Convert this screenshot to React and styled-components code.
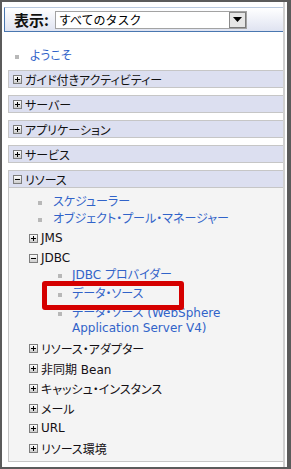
import React from "react";
import styled, { createGlobalStyle } from "styled-components";

const GlobalStyle = createGlobalStyle`
  html, body {
    margin: 0;
    padding: 0;
    background: #ffffff;
  }
  body {
    font-family: "DejaVu Sans", "Noto Sans CJK JP", sans-serif;
  }
`;

const Frame = styled.div`
  position: relative;
  box-sizing: border-box;
  width: 291px;
  height: 469px;
  border: 2px solid #5b5b5b;
  border-right-width: 4px;
  padding-right: 2px;
  background: #ffffff;
  overflow: hidden;
`;

const Panel = styled.div`
  box-sizing: border-box;
  height: 100%;
  border-right: 2px solid #d0d0d0;
  padding: 5px 0 0 2px;
`;

const Header = styled.div`
  box-sizing: border-box;
  display: flex;
  align-items: center;
  height: 25px;
  padding-left: 9px;
  border-top: 1px solid #b8c8de;
  border-left: 1px solid #4a77b0;
  border-bottom: 1px solid #4a77b0;
  background: linear-gradient(#ffffff, #dfe3f1);
`;

const Label = styled.span`
  font-family: "Noto Sans CJK JP", sans-serif;
  font-weight: bold;
  font-size: 15px;
  line-height: 18px;
  color: #111111;
  margin-right: 6px;
`;

const Select = styled.div`
  box-sizing: border-box;
  display: flex;
  align-items: center;
  justify-content: space-between;
  width: 192px;
  height: 18px;
  border: 1px solid #a3a3a3;
  background: #ffffff;
  padding: 0 0 0 3px;
  font-family: "Noto Sans CJK JP", sans-serif;
  font-size: 12px;
  color: #000000;
`;

const DropButton = styled.span`
  box-sizing: border-box;
  display: flex;
  align-items: center;
  justify-content: center;
  width: 17px;
  height: 16px;
  border: 1px solid #7a7a7a;
  border-top-color: #8a8a8a;
  border-left-color: #8a8a8a;
  background: #e6e6e6;
`;

const Welcome = styled.div`
  display: flex;
  align-items: center;
  margin: 17px 0 6px 11px;
  height: 15px;
`;

const Bullet = styled.span`
  display: inline-block;
  width: 4px;
  height: 4px;
  background: #b8b8b8;
  margin-right: ${(p) => p.$gap}px;
  flex-shrink: 0;
`;

const Link = styled.span`
  font-size: 12px;
  line-height: 15px;
  color: #3163c9;
  font-feature-settings: "palt";
`;

const Section = styled.div`
  margin: 0 0 7px 4px;
`;

const SectionHead = styled.div`
  box-sizing: border-box;
  display: flex;
  align-items: center;
  height: 18px;
  padding-left: 4px;
  border: 1px solid #c6c6c6;
  border-right: none;
  background: #dcdff0;
  font-size: 12px;
  color: #111111;
  font-feature-settings: "palt";
`;

const SectionBody = styled.div`
  box-sizing: border-box;
  padding: 6px 0 3px 0;
  border: 1px solid #c6c6c6;
  border-top: none;
  border-right: none;
  background: #f4f4f4;
`;

const LeafRow = styled.div`
  display: flex;
  align-items: ${(p) => (p.$multi ? "flex-start" : "center")};
  height: ${(p) => (p.$multi ? "auto" : `${p.$h}px`)};
  padding: ${(p) => (p.$multi ? "2px 0" : "0")};
  padding-left: ${(p) => p.$indent}px;
  box-sizing: border-box;

  & > span:first-child {
    margin-top: ${(p) => (p.$multi ? "6px" : "0")};
  }
`;

const FolderRow = styled.div`
  display: flex;
  align-items: center;
  height: 20px;
  padding-left: ${(p) => p.$indent}px;
  font-size: 12px;
  color: #141014;
  font-feature-settings: "palt";
`;

const Children = styled.div`
  margin-top: -2px;
`;

const IconBox = styled.svg`
  flex-shrink: 0;
  margin-right: ${(p) => p.$gap}px;
`;

const Highlight = styled.div`
  position: absolute;
  left: 40px;
  top: 279px;
  width: 142px;
  height: 29px;
  box-sizing: border-box;
  border: 5px solid #d50000;
  border-radius: 3px;
  pointer-events: none;
`;

const Toggle = ({ open, gap = 3 }) => (
  <IconBox $gap={gap} width="9" height="9" viewBox="0 0 9 9">
    <defs>
      <linearGradient id="tg" x1="0" y1="0" x2="0" y2="1">
        <stop offset="0" stopColor="#ffffff" />
        <stop offset="1" stopColor="#c9c9c9" />
      </linearGradient>
    </defs>
    <rect x="0.5" y="0.5" width="8" height="8" fill="url(#tg)" stroke="#7d7d7d" />
    <rect x="2" y="4" width="5" height="1" fill="#000" />
    {!open && <rect x="4" y="2" width="1" height="5" fill="#000" />}
  </IconBox>
);

const Leaf = ({ indent, h = 17, gap, children, multi }) => (
  <LeafRow $indent={indent} $h={h} $multi={multi}>
    <Bullet $gap={gap} />
    <Link>{children}</Link>
  </LeafRow>
);

const Folder = ({ indent = 20, open, children }) => (
  <FolderRow $indent={indent}>
    <Toggle open={open} gap={3} />
    {children}
  </FolderRow>
);

const categories = ["ガイド付きアクティビティー", "サーバー", "アプリケーション", "サービス"];

export default function App() {
  return (
    <>
      <GlobalStyle />
      <Frame>
        <Panel>
          <Header>
            <Label>表示:</Label>
            <Select>
              <span>すべてのタスク</span>
              <DropButton>
                <svg width="9" height="5" viewBox="0 0 9 5">
                  <path d="M0 0 H9 L4.5 5 Z" fill="#000" />
                </svg>
              </DropButton>
            </Select>
          </Header>

          <Welcome>
            <Bullet $gap={11} />
            <Link>ようこそ</Link>
          </Welcome>

          {categories.map((c) => (
            <Section key={c}>
              <SectionHead>
                <Toggle gap={3} />
                {c}
              </SectionHead>
            </Section>
          ))}

          <Section>
            <SectionHead>
              <Toggle open gap={3} />
              リソース
            </SectionHead>
            <SectionBody>
              <Leaf indent={29} gap={11}>スケジューラー</Leaf>
              <Leaf indent={29} gap={11}>オブジェクト・プール・マネージャー</Leaf>
              <Folder>JMS</Folder>
              <Folder open>JDBC</Folder>
              <Children>
                <Leaf indent={49} h={19} gap={10}>JDBC プロバイダー</Leaf>
                <Leaf indent={49} h={19} gap={10}>データ・ソース</Leaf>
                <Leaf indent={49} gap={10} multi>
                  データ・ソース (WebSphere
                  <br />
                  Application Server V4)
                </Leaf>
              </Children>
              <Folder>リソース・アダプター</Folder>
              <Folder>非同期 Bean</Folder>
              <Folder>キャッシュ・インスタンス</Folder>
              <Folder>メール</Folder>
              <Folder>URL</Folder>
              <Folder>リソース環境</Folder>
            </SectionBody>
          </Section>
        </Panel>
        <Highlight />
      </Frame>
    </>
  );
}
